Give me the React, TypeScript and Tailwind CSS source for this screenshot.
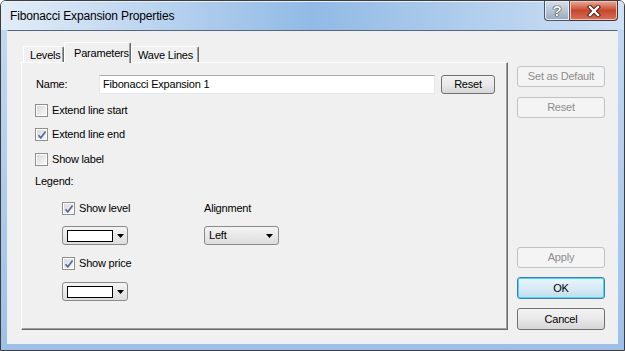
import React from 'react'

const FONT = "font-['Liberation_Sans',Arial,sans-serif]"

const CheckBox = ({ checked, label }: { checked?: boolean; label: string }) => (
  <div className="flex h-[13px] items-center">
    <span className="relative flex h-[13px] w-[13px] items-center justify-center border border-[#8e8f8f] bg-white">
      <span className="h-[9px] w-[9px] bg-gradient-to-br from-[#d9dadb] to-[#f7f7f7]" />
      {checked && (
        <svg className="absolute left-[1px] top-[1px]" width="10" height="10" viewBox="0 0 10 10">
          <path d="M1.5 5.2 L3.8 7.8 L8.6 1.6" fill="none" stroke="#56699f" strokeWidth="1.7" />
        </svg>
      )}
    </span>
    <span className="ml-[4px] tracking-[-0.2px]">{label}</span>
  </div>
)

const Arrow = () => (
  <svg width="7" height="4" viewBox="0 0 7 4">
    <path d="M0 0 H7 L3.5 4 Z" fill="#000" />
  </svg>
)

const ColorCombo = () => (
  <div className="flex h-[19px] w-[66px] items-center rounded-[3px] border border-[#8a8a8a] bg-gradient-to-b from-[#f4f4f4] to-[#dedede] pl-[4px]">
    <span className="h-[12px] w-[46px] border border-black bg-white" />
    <span className="ml-[4px] flex items-center">
      <Arrow />
    </span>
  </div>
)

type BtnKind = 'normal' | 'disabled' | 'default'

const WinButton = ({ label, kind = 'normal', className = '' }: { label: string; kind?: BtnKind; className?: string }) => {
  const styles: Record<BtnKind, string> = {
    normal: 'border-[#707070] bg-gradient-to-b from-[#f3f3f3] via-[#e9e9e9] to-[#d6d6d6] text-black',
    disabled: 'border-[#c0c3c5] bg-[#f4f4f4] text-[#8d8d8d]',
    default: 'border-[#3c7fb1] bg-gradient-to-b from-[#eaf5fc] via-[#d9ebf7] to-[#c3dbec] text-black shadow-[inset_0_0_0_1px_#48d8fb]',
  }
  return (
    <div className={`flex items-center justify-center rounded-[3px] border ${styles[kind]} ${className}`}>
      <span className="tracking-[-0.2px]">{label}</span>
    </div>
  )
}

const Tab = ({ label, active, className = '' }: { label: string; active?: boolean; className?: string }) => (
  <div
    className={`flex items-start rounded-t-[2px] border-l border-t border-r border-l-white border-t-white border-r-[#696969] bg-[#f0f0f0] shadow-[inset_-1px_0_0_#a0a0a0] ${
      active ? 'relative z-10 h-[21px] pt-[5px]' : 'h-[17px] pt-[3px]'
    } ${className}`}
  >
    <span className="tracking-[-0.2px]">{label}</span>
  </div>
)

export default function App() {
  return (
    <div className={`${FONT} h-[351px] w-[625px] overflow-hidden bg-white text-[11px] leading-none text-black`}>
      <div className="flex h-[351px] w-[625px] flex-col rounded-t-[6px] border border-[#3d3d3d] bg-gradient-to-b from-[#c6daf0] to-[#9fc0e6]">
        {/* title bar */}
        <div className="flex h-[29px] items-start rounded-t-[5px] bg-gradient-to-r from-[#e3edf8] via-[#91bae5] to-[#cfe1f4] shadow-[inset_0_1px_0_#e9f1fa]">
          <span className="ml-[9px] mt-[9px] text-[12px] tracking-[-0.15px] text-black">Fibonacci Expansion Properties</span>
          <div className="ml-auto mr-[6px] flex h-[20px]">
            <div className="flex h-[20px] w-[26px] items-center justify-center rounded-bl-[4px] border border-t-0 border-[#4a5565] bg-gradient-to-b from-[#d7e1ec] via-[#b7c5d5] to-[#98a9bd] shadow-[inset_0_0_0_1px_#e6edf5]">
              <span className="text-[15px] font-bold text-white [text-shadow:0_0_1px_#222,0_0_1px_#222,0_0_1px_#222]">?</span>
            </div>
            <div className="flex h-[20px] w-[48px] items-center justify-center rounded-br-[4px] border border-l-0 border-t-0 border-[#4a3030] bg-gradient-to-b from-[#e8a997] via-[#c8452c] to-[#d7705a] shadow-[inset_0_0_0_1px_#eec2b6]">
              <svg width="14" height="12" viewBox="0 0 14 12">
                <path d="M3 2 L11 10 M11 2 L3 10" stroke="#3a1a14" strokeWidth="4.2" strokeLinecap="square" />
                <path d="M3 2 L11 10 M11 2 L3 10" stroke="#ffffff" strokeWidth="2.4" strokeLinecap="square" />
              </svg>
            </div>
          </div>
        </div>

        {/* client area */}
        <div className="mx-[6px] mb-[6px] flex flex-1 border border-[#55657b] border-b-[#e9f0f8] border-l-[#e9f0f8] border-r-[#e9f0f8] bg-[#f0f0f0]">
          {/* tabs + panel */}
          <div className="ml-[13px] mt-[11px] flex w-[487px] flex-col">
            <div className="flex items-end pl-[2px]">
              <Tab label="Levels" className="w-[41px] pl-[6px]" />
              <Tab label="Parameters" active className="w-[67px] pl-[9px]" />
              <Tab label="Wave Lines" className="w-[68px] pl-[6px]" />
            </div>
            <div className="-mt-px h-[268px] border border-l-white border-t-white border-r-[#696969] border-b-[#696969] shadow-[inset_-1px_-1px_0_#a0a0a0]">
              <div className="flex flex-col pl-[13px]">
                {/* name row */}
                <div className="mt-[12px] flex items-center">
                  <span className="ml-[1px] w-[63px] tracking-[-0.2px]">Name:</span>
                  <div className="flex h-[19px] w-[336px] items-center border border-[#e3e9ef] border-t-[#abadb3] bg-white pl-[3px]">
                    <span className="tracking-[-0.2px]">Fibonacci Expansion 1</span>
                  </div>
                  <WinButton label="Reset" className="ml-[6px] h-[19px] w-[54px]" />
                </div>

                <div className="mt-[10px]">
                  <CheckBox label="Extend line start" />
                </div>
                <div className="mt-[11px]">
                  <CheckBox checked label="Extend line end" />
                </div>
                <div className="mt-[12px]">
                  <CheckBox label="Show label" />
                </div>
                <div className="mt-[10px] h-[13px] tracking-[-0.2px]">Legend:</div>

                {/* legend block */}
                <div className="ml-[27px] mt-[13px] flex">
                  <div className="flex w-[142px] flex-col">
                    <CheckBox checked label="Show level" />
                    <div className="mt-[11px]">
                      <ColorCombo />
                    </div>
                    <div className="mt-[12px]">
                      <CheckBox checked label="Show price" />
                    </div>
                    <div className="mt-[12px]">
                      <ColorCombo />
                    </div>
                  </div>
                  <div className="flex flex-col">
                    <div className="flex h-[13px] items-center tracking-[-0.2px]">Alignment</div>
                    <div className="mt-[11px] flex h-[19px] w-[75px] items-center justify-between rounded-[3px] border border-[#8a8a8a] bg-gradient-to-b from-[#f4f4f4] to-[#dcdcdc] pl-[4px] pr-[5px]">
                      <span className="tracking-[-0.2px]">Left</span>
                      <Arrow />
                    </div>
                  </div>
                </div>
              </div>
            </div>
          </div>

          {/* right buttons */}
          <div className="ml-[9px] mt-[35px] flex w-[88px] flex-col">
            <WinButton label="Set as Default" kind="disabled" className="h-[21px]" />
            <WinButton label="Reset" kind="disabled" className="mt-[10px] h-[21px]" />
            <WinButton label="Apply" kind="disabled" className="mt-[129px] h-[21px]" />
            <WinButton label="OK" kind="default" className="mt-[9px] h-[22px]" />
            <WinButton label="Cancel" className="mt-[9px] h-[22px]" />
          </div>
        </div>
      </div>
    </div>
  )
}
